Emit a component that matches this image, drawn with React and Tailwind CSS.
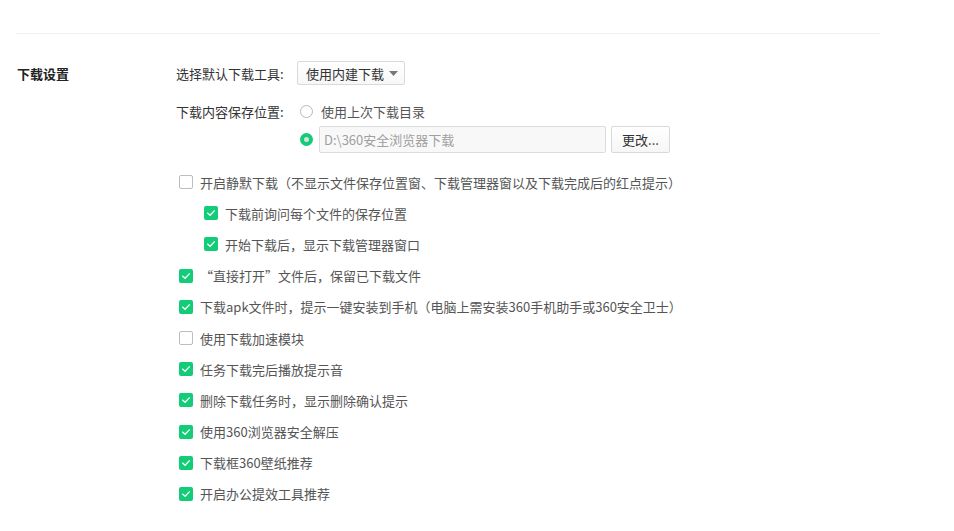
import { useState } from "react";

const GREEN = "bg-[#12cc78]";

const Check = ({ checked, onClick }) => (
    <span
        onClick={onClick}
        className={
            "flex h-[14px] w-[14px] shrink-0 items-center justify-center rounded-[2px] " +
            (checked ? GREEN : "border border-[#bdbdbd] bg-white")
        }
    >
        {checked && (
            <svg width="10" height="10" viewBox="0 0 10 10" fill="none">
                <path d="M1.8 5.2 L4.1 7.3 L8.3 2.8" stroke="#fff" strokeWidth="1.3" strokeLinecap="square" />
            </svg>
        )}
    </span>
);

const Radio = ({ checked }) =>
    checked ? (
        <span className={"flex h-[13px] w-[13px] shrink-0 items-center justify-center rounded-full " + GREEN}>
            <span className="h-[5px] w-[5px] rounded-full bg-[#dedede]" />
        </span>
    ) : (
        <span className="h-[13px] w-[13px] shrink-0 rounded-full border border-[#b8b8b8] bg-white" />
    );

const options = [
    { label: "开启静默下载（不显示文件保存位置窗、下载管理器窗以及下载完成后的红点提示）", checked: false },
    { label: "下载前询问每个文件的保存位置", checked: true, nested: true },
    { label: "开始下载后，显示下载管理器窗口", checked: true, nested: true },
    { label: "“直接打开”文件后，保留已下载文件", checked: true },
    { label: "下载apk文件时，提示一键安装到手机（电脑上需安装360手机助手或360安全卫士）", checked: true },
    { label: "使用下载加速模块", checked: false },
    { label: "任务下载完后播放提示音", checked: true },
    { label: "删除下载任务时，显示删除确认提示", checked: true },
    { label: "使用360浏览器安全解压", checked: true },
    { label: "下载框360壁纸推荐", checked: true },
    { label: "开启办公提效工具推荐", checked: true },
];

export default function App() {
    const [items, setItems] = useState(options);

    const toggle = (i) => {
        setItems(items.map((it, idx) => (idx === i ? { ...it, checked: !it.checked } : it)));
    };

    return (
        <div
            className="h-[531px] w-[954px] overflow-hidden bg-white text-[13px] text-[#333]"
            style={{ fontFamily: '"Noto Sans CJK SC", "Noto Sans", sans-serif' }}
        >
            <div className="ml-4 w-[864px] pt-[33px]">
                <div className="border-t border-[#f0f0f0]" />
                <div className="flex pt-[27px]">
                    {/* colonne de gauche */}
                    <div className="w-[160px] shrink-0 pl-px">
                        <div className="flex h-[24px] items-center font-bold leading-none text-[#222]">下载设置</div>
                    </div>

                    <div className="flex flex-col">
                        <div className="flex h-[24px] items-center">
                            <span className="w-[121px] leading-none">选择默认下载工具:</span>
                            <div className="flex h-[24px] w-[108px] items-center justify-between rounded-[2px] border border-[#d9d9d9] bg-gradient-to-b from-white to-[#f7f7f7] pl-[8px] pr-[6px] leading-none">
                                <span>使用内建下载</span>
                                <svg width="9" height="5" viewBox="0 0 9 5">
                                    <path d="M0 0 H9 L4.5 5 Z" fill="#777" />
                                </svg>
                            </div>
                        </div>

                        <div className="mt-[14px] flex">
                            <span className="flex h-[24px] w-[121px] items-center leading-none">下载内容保存位置:</span>
                            <div className="ml-[3px] flex flex-col">
                                <div className="flex h-[24px] items-center gap-[8px] leading-none text-[#555]">
                                    <Radio />
                                    <span>使用上次下载目录</span>
                                </div>
                                <div className="mt-[3px] flex h-[27px] items-center">
                                    <Radio checked />
                                    <div className="ml-[6px] flex h-[27px] w-[287px] items-center rounded-[2px] border border-[#dcdcdc] bg-[#f8f8f8] pl-[4px] leading-none text-[#a0a0a0]">
                                        D:\360安全浏览器下载
                                    </div>
                                    <button className="ml-[5px] flex h-[27px] w-[59px] items-center justify-center rounded-[2px] border border-[#d9d9d9] bg-gradient-to-b from-white to-[#f6f6f6] leading-none text-[#333]">
                                        更改...
                                    </button>
                                </div>
                            </div>
                        </div>

                        <div className="mt-[13.5px] flex flex-col">
                            {items.map((it, i) => (
                                <label
                                    key={i}
                                    className={
                                        "flex h-[31.2px] cursor-pointer items-center gap-[7px] leading-none text-[#555] " +
                                        (it.nested ? "pl-[28px]" : "pl-[3px]")
                                    }
                                >
                                    <Check checked={it.checked} onClick={() => toggle(i)} />
                                    <span className="whitespace-nowrap">{it.label}</span>
                                </label>
                            ))}
                        </div>
                    </div>
                </div>
            </div>
        </div>
    );
}
